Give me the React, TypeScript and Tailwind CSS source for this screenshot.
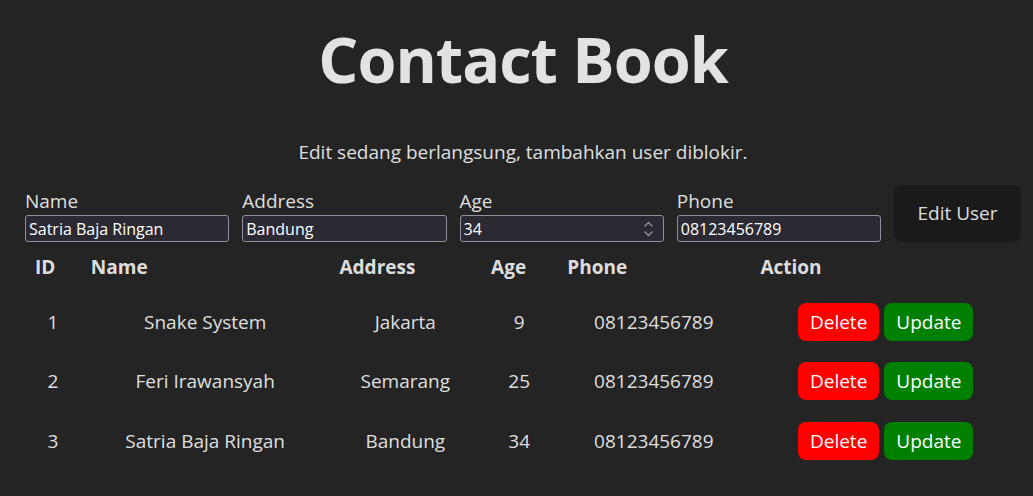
const contacts = [
  { id: 1, name: 'Snake System', address: 'Jakarta', age: 9, phone: '08123456789' },
  { id: 2, name: 'Feri Irawansyah', address: 'Semarang', age: 25, phone: '08123456789' },
  { id: 3, name: 'Satria Baja Ringan', address: 'Bandung', age: 34, phone: '08123456789' },
];

function Field({ label, value, spinner }: { label: string; value: string; spinner?: boolean }) {
  return (
    <div className="flex flex-1 flex-col">
      <label className="text-[19px] leading-[27px]">{label}</label>
      <div className="relative flex h-[27px] items-center rounded-[3px] border border-[#8f8f9d] bg-[#2b2a33] pl-[3px] text-[16px] text-white">
        <span>{value}</span>
        {spinner && (
          <svg className="absolute right-[9px] top-[5px]" width="11" height="16" viewBox="0 0 11 16" fill="none" stroke="#8f8f9d" strokeWidth="1.4">
            <path d="M1.5 5.5 L5.5 1.5 L9.5 5.5" />
            <path d="M1.5 10.5 L5.5 14.5 L9.5 10.5" />
          </svg>
        )}
      </div>
    </div>
  );
}

export default function App() {
  return (
    <div className="min-h-[496px] bg-[#242424] pl-[25px] pr-[12px] font-['Open_Sans',sans-serif] text-[rgba(255,255,255,0.87)]">
      <h1 className="pt-[14px] text-center text-[63px] font-bold leading-[90px] tracking-[-1px]">Contact Book</h1>
      <p className="mt-[35px] text-center text-[19px] leading-[27px]">Edit sedang berlangsung, tambahkan user diblokir.</p>
      <form className="mt-[19px] flex items-end gap-[13px]" onSubmit={(e) => e.preventDefault()}>
        <Field label="Name" value="Satria Baja Ringan" />
        <Field label="Address" value="Bandung" />
        <Field label="Age" value="34" spinner />
        <Field label="Phone" value="08123456789" />
        <button type="submit" className="h-[57px] w-[127px] shrink-0 rounded-[8px] bg-[#1a1a1a] text-[19px]">
          Edit User
        </button>
      </form>
      <table className="w-full border-collapse text-[19px]">
        <thead>
          <tr className="h-[51px]">
            <th className="px-[10px] text-left font-bold">ID</th>
            <th className="px-[10px] text-left font-bold">Name</th>
            <th className="px-[10px] text-left font-bold">Address</th>
            <th className="px-[10px] text-left font-bold">Age</th>
            <th className="px-[10px] text-left font-bold">Phone</th>
            <th className="px-[10px] text-left font-bold">Action</th>
          </tr>
        </thead>
        <tbody>
          {contacts.map((c) => (
            <tr key={c.id} className="h-[59.5px] text-center">
              <td className="px-[10px] pb-[2px]">{c.id}</td>
              <td className="px-[10px] pb-[2px]">{c.name}</td>
              <td className="px-[10px] pb-[2px]">{c.address}</td>
              <td className="px-[10px] pb-[2px]">{c.age}</td>
              <td className="px-[10px] pb-[2px]">{c.phone}</td>
              <td className="px-[10px] pb-[2px]">
                <div className="flex justify-center gap-[5px]">
                  <button className="h-[38px] rounded-[8px] bg-[#ff0000] px-[12px] text-white">Delete</button>
                  <button className="h-[38px] rounded-[8px] bg-[#008000] px-[12px] text-white">Update</button>
                </div>
              </td>
            </tr>
          ))}
        </tbody>
      </table>
    </div>
  );
}
